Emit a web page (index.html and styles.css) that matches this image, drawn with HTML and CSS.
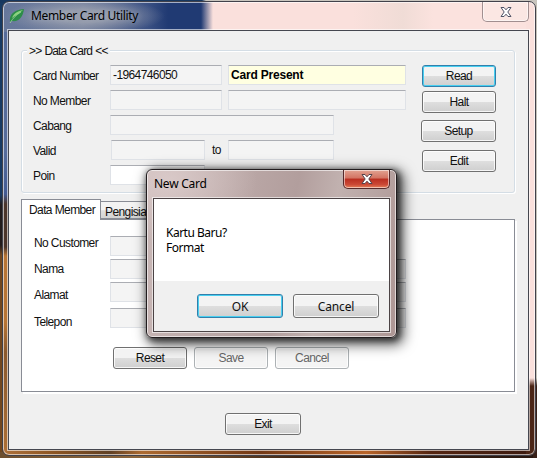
FILE: index.html
```html
<!DOCTYPE html>
<html lang="id">
<head>
<meta charset="utf-8">
<title>Member Card Utility</title>
<link rel="stylesheet" href="styles.css">
</head>
<body>
<main class="window">
  <header class="titlebar">
    <svg class="leaf" viewBox="0 0 16 16"><path d="M1 14C0 6 5 2 15 1C14 9 10 14 3 13Z" fill="#2d8d48"/><path d="M3 10C5 5 9 3 14 2C11 5 7 7 3 10Z" fill="#8bd47d"/><path d="M1 15C4 10 7 7 12 4" fill="none" stroke="#c1edb4" stroke-width=".6"/></svg>
    <h1>Member Card Utility</h1>
    <button class="close" aria-label="Close"><svg viewBox="0 0 12 10"><path d="M1 .5H4L6 2.8L8 .5H11L7.8 5L11 9.5H8L6 7.2L4 9.5H1L4.2 5Z" fill="#fff" stroke="#505366"/></svg></button>
  </header>
  <div class="client">
    <section class="group">
      <h2>&gt;&gt; Data Card &lt;&lt;</h2>
      <div class="group-body">
        <div class="rows">
          <div class="row"><label>Card Number</label><div class="field id">-1964746050</div><div class="field status"><b>Card Present</b></div></div>
          <div class="row"><label>No Member</label><div class="field id"></div><div class="field wide"></div></div>
          <div class="row"><label>Cabang</label><div class="field branch"></div></div>
          <div class="row"><label>Valid</label><div class="field date"></div><span class="to">to</span><div class="field until"></div></div>
          <div class="row"><label>Poin</label><div class="field point"></div></div>
        </div>
        <div class="actions">
          <button class="btn focus read">Read</button>
          <button class="btn halt">Halt</button>
          <button class="btn setup">Setup</button>
          <button class="btn edit">Edit</button>
        </div>
      </div>
    </section>
    <nav class="tabs"><div class="tab active">Data Member</div><div class="tab">Pengisian</div></nav>
    <section class="pane">
      <div class="member-row customer"><label>No Customer</label><div class="field"></div></div>
      <div class="member-row name"><label>Nama</label><div class="field"></div></div>
      <div class="member-row address"><label>Alamat</label><div class="field"></div></div>
      <div class="member-row phone"><label>Telepon</label><div class="field"></div></div>
      <div class="pane-actions"><button class="btn">Reset</button><button class="btn" disabled>Save</button><button class="btn" disabled>Cancel</button></div>
    </section>
    <footer><button class="btn exit">Exit</button></footer>
  </div>
</main>
<div class="dialog" role="dialog">
  <header><h2>New Card</h2><button class="close red" aria-label="Close"><svg viewBox="0 0 12 10"><path d="M1 .5H4L6 2.8L8 .5H11L7.8 5L11 9.5H8L6 7.2L4 9.5H1L4.2 5Z" fill="#fff" stroke="#56434b"/></svg></button></header>
  <div class="dialog-client">
    <p>Kartu Baru?<br>Format</p>
    <div class="dialog-actions"><button class="btn focus">OK</button><button class="btn">Cancel</button></div>
  </div>
</div>
</body>
</html>
```

FILE: styles.css
```css
* { box-sizing: border-box; }
body {
  width: 537px; height: 458px; margin: 0; padding: 1px 1px 3px 2px; overflow: hidden;
  font: 12px/14px "Liberation Sans", sans-serif; letter-spacing: -.6px; color: #111;
  background:
    linear-gradient(90deg, #16375f 0 202px, #c9c5be 206px) 0 0 / 537px 3px no-repeat,
    linear-gradient(#c5c2b9 0 378px, #382018 386px) 100% 0 / 4px 458px no-repeat,
    linear-gradient(90deg, #6d5030, #8b653b 25%, #422716 55%, #281710) 0 100% / 537px 6px no-repeat,
    linear-gradient(#173a63 0 195px, #201a1b 205px 245px, #71471f 255px);
}
h1, h2, p { margin: 0; font-weight: normal; }
button { font: inherit; letter-spacing: inherit; }
.window {
  width: 534px; height: 455px; padding: 0 6px 5px 5px; border: 1px solid #41414a;
  border-radius: 7px; box-shadow: inset 0 0 0 1px #ffffff99;
  background:
    radial-gradient(ellipse 80px 18px at 82px 14px, #a0a5b1bb 0 35%, #a9adb700) 0 0 / 200px 29px no-repeat,
    linear-gradient(#fae0dc 0 376px, #4b2516 384px) 100% 0 / 9px 455px no-repeat,
    linear-gradient(90deg, #ae713a, #8b5422 10%, #604024 20%, #ac6a30 26%, #733815 48%, #b96429 68%, #552612 80%, #3b1a10) 0 100% / 534px 7px no-repeat,
    linear-gradient(90deg, #66779b 0, #6f7c9c 80px, #3a5083 145px, #203a73 165px 198px, #fae0dc 210px 350px, #f0dcd6 400px, #fbe2de 430px) 0 0 / 534px 30px no-repeat,
    linear-gradient(#566c9b 0 150px, #435b93 192px, #4b352b 202px 245px, #b87535 254px 320px, #8a592e 350px, #ad7036);
}
.titlebar { display: flex; height: 28px; }
.leaf { width: 16px; height: 16px; margin: 6px 0 0 1px; }
.titlebar h1 { margin: 4px 0 0 6px; font: 12px/20px "Noto Sans", sans-serif; letter-spacing: -.34px; text-shadow: 0 0 7px #fff6; color: #000; }
.close { width: 47px; height: 20px; padding: 0; border: 1px solid #a18f90; border-top: 0; border-radius: 0 0 5px 5px; background: #fbe7e3; box-shadow: inset 0 0 0 1px #fff8; }
.titlebar .close { margin-left: auto; }
.close svg { display: block; width: 12px; height: 10px; margin: 0 auto; }
.client { width: 521px; height: 420px; padding: 12px 12px 0; border: 1px solid #454750; background: #f0f0f0; box-shadow: 0 0 0 1px #fff9; }
.group { display: grid; grid-template-rows: 149px; width: 494px; height: 149px; }
.group::before { content: ""; height: 141px; margin-top: 7px; border: 1px solid #d4dde5; border-radius: 3px; box-shadow: inset 1px 1px #fff, 1px 1px #fff; }
.group::before, .group > * { grid-area: 1 / 1; }
.group h2 { justify-self: start; height: 14px; margin-left: 6px; padding: 0 2px; background: #f0f0f0; font-size: 12px; line-height: 16px; letter-spacing: -.82px; word-spacing: .5px; }
.group-body { display: flex; justify-content: space-between; margin: 22px 19px 0 12px; }
.rows { display: grid; gap: 5px; align-content: start; }
.row { display: flex; height: 20px; }
.row label { width: 77px; padding-top: 4px; }
.field { height: 20px; border: 1px solid #dfe2e7; border-top-color: #abadb3; background: #f4f4f4; }
.id { width: 112px; padding: 2px 2px; }
.status, .wide { width: 178px; margin-left: 6px; }
.status { padding: 2px; background: #ffffe1; color: #000; letter-spacing: -.2px; }
.branch { width: 224px; }
.date { width: 94px; margin-left: 1px; }
.to { width: 23px; padding: 3px 0 0 7px; }
.until { width: 106px; }
.point { width: 95px; background: #fff; }
.btn { width: 74px; height: 22px; padding: 0; border: 1px solid #707070; border-radius: 3px; background: linear-gradient(#f3f3f3 0 48%, #dedede 52%, #cfcfcf); box-shadow: inset 0 0 0 1px #fffc; color: #111; line-height: 20px; }
.focus { border-color: #327fab; box-shadow: inset 0 0 0 1px #48cff0; }
.btn:disabled { border-color: #adb2b5; background: #f4f4f4; color: #666; }
.actions { display: flex; flex-direction: column; align-items: flex-end; }
.halt { margin-top: 4px; }
.setup { width: 75px; margin-top: 7px; }
.edit { margin-top: 8px; }
.tabs { display: flex; height: 20px; margin-top: 7px; align-items: flex-end; }
.tab { position: relative; width: 80px; height: 18px; padding: 3px 4px; border: 1px solid #898c95; border-left: 0; background: linear-gradient(#f3f3f3 50%, #dedede 54%, #d3d3d3); white-space: nowrap; }
.active { z-index: 1; height: 21px; margin-bottom: -1px; padding: 3px 7px; border-left: 1px solid #898c95; border-bottom: 0; background: #fff; }
.pane { width: 494px; height: 173px; padding: 16px 12px 0; border: 1px solid #898c95; background: #fff; box-shadow: 2px 2px #fff; }
.member-row { display: flex; height: 20px; margin-bottom: 3px; }
.member-row label { width: 76px; padding-top: 3px; white-space: nowrap; }
.member-row .field { width: 296px; }
.member-row.customer label { padding-top: 0; }
.member-row.customer .field { width: 200px; }
.member-row.address { margin-bottom: 6px; }
.member-row.address label { padding-top: 6px; }
.member-row.phone label { padding-top: 7px; }
.pane-actions { display: flex; gap: 7px; margin: 19px 0 0 79px; }
footer { padding: 21px 0 0 204px; }
.exit { width: 76px; }
.dialog { position: absolute; left: 146px; top: 169px; width: 251px; height: 169px; padding: 0 6px 6px; border: 1px solid #211c1e; border-radius: 6px; font: 12px/15px "Noto Sans", sans-serif; letter-spacing: -.15px; background: radial-gradient(ellipse at 20px 10px, #d9c9c8, #d9c9c800 90px), linear-gradient(100deg, #c9b8b7, #b29e9d 55%, #c1b1af 70%, #ad9694); box-shadow: inset 0 0 0 1px #fff9, 2px 2px 6px 1px #0009, 4px 4px 13px 3px #0009; }
.dialog header { display: flex; justify-content: space-between; height: 28px; }
.dialog h2 { padding: 6px 0 0 1px; font-size: 12px; letter-spacing: -.25px; color: #000; }
.close.red { height: 19px; border-color: #552b2c; background: linear-gradient(#e2a392, #d37362 45%, #b92e20 50%, #cb4835 80%, #e48059); box-shadow: inset 0 0 0 1px #fff8; }
.dialog-client { width: 237px; height: 134px; border: 1px solid #4b4345; background: #fff; box-shadow: 0 0 0 1px #fff9; }
.dialog p { height: 82px; padding: 26px 12px 0; letter-spacing: -.5px; color: #000; }
.dialog-actions { display: flex; gap: 10px; height: 50px; padding: 13px 0 0 43px; background: #f0f0f0; }
.dialog .btn { width: 86px; height: 24px; line-height: 21px; }
```
